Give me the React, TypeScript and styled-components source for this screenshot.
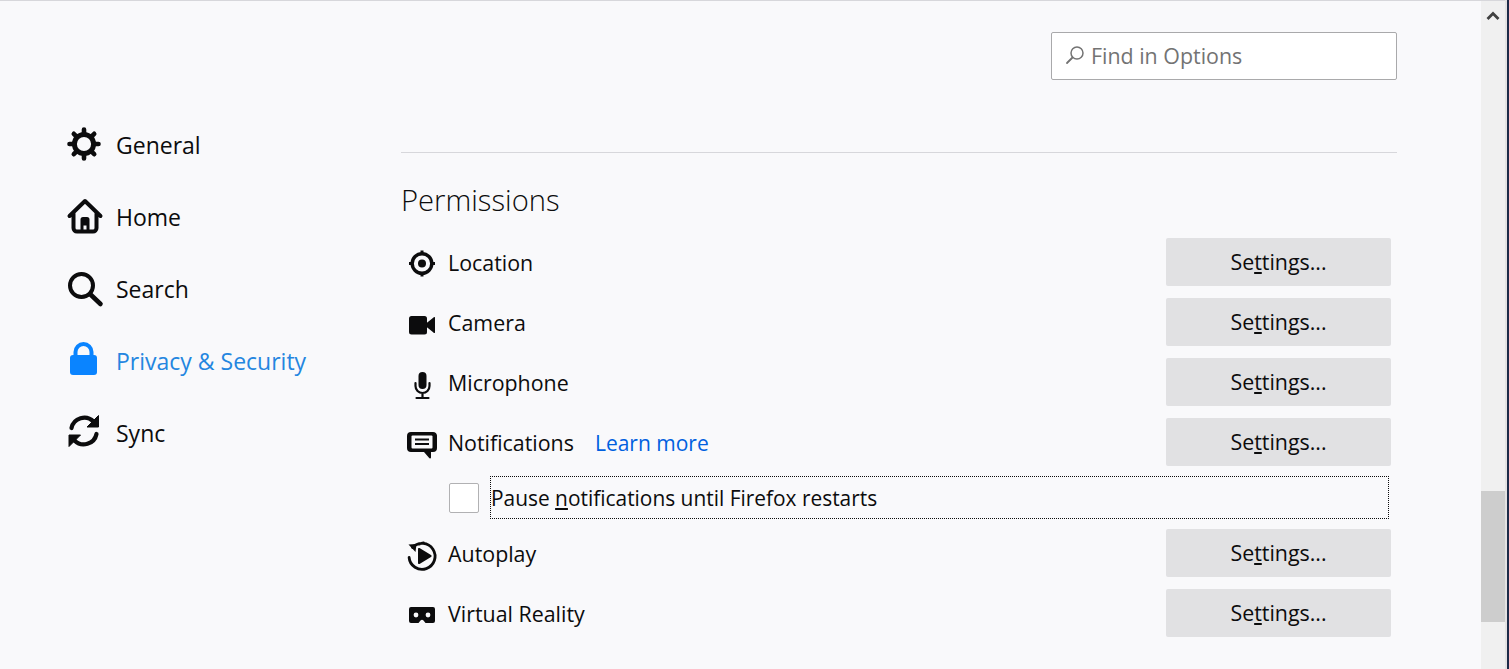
import styled, { createGlobalStyle } from "styled-components";

const GlobalStyle = createGlobalStyle`
    html, body {
        margin: 0;
        height: 100%;
        overflow: hidden;
        background: #f9f9fb;
    }
    body {
        color: #0c0c0d;
        font-family: "Open Sans", "Noto Sans", sans-serif;
        font-size: 21.4px;
    }
`;

const Page = styled.div`
    border-top: 1px solid #d7d7db;
    box-sizing: border-box;
    display: flex;
    height: 669px;
    width: 1509px;
`;

const Main = styled.div`
    display: flex;
    flex: 1;
    flex-direction: column;
    min-width: 0;
`;

const TopBar = styled.div`
    display: flex;
    justify-content: flex-end;
    padding: 31px 84px 0 0;
`;

const SearchBox = styled.div`
    align-items: center;
    background: #fff;
    border: 1px solid #a9a9ab;
    border-radius: 2px;
    box-sizing: border-box;
    color: #737373;
    display: flex;
    gap: 6px;
    height: 48px;
    padding: 0 0 2px 13px;
    width: 346px;
`;

const Columns = styled.div`
    display: flex;
    flex: 1;
`;

const Sidebar = styled.nav`
    display: flex;
    flex-direction: column;
    padding: 29px 0 0 67px;
    width: 334px;
`;

const NavItem = styled.div<{ $active?: boolean }>`
    align-items: center;
    color: ${(props) => (props.$active ? "#0a84ff" : "#0c0c0d")};
    display: flex;
    gap: 13px;
    height: 72px;
`;

const NavLabel = styled.span<{ $active?: boolean }>`
    color: ${(props) => (props.$active ? "#2486e0" : "#0c0c0d")};
    font-size: 23px;
`;

const IconBox = styled.span<{ $size: number }>`
    align-items: center;
    display: flex;
    flex: none;
    height: ${(props) => props.$size}px;
    justify-content: center;
    width: ${(props) => props.$size}px;

    svg {
        overflow: visible;
    }
`;

const Content = styled.section`
    display: flex;
    flex-direction: column;
    margin-right: 84px;
    padding-top: 72px;
    width: 996px;
`;

const Divider = styled.hr`
    background: #d7d7db;
    border: 0;
    height: 1px;
    margin: 0;
`;

const Heading = styled.h2`
    font-size: 29.2px;
    font-weight: 300;
    line-height: 42px;
    margin: 26px 0 17px;
`;

const Rows = styled.div`
    display: flex;
    flex-direction: column;
`;

const Row = styled.div`
    align-items: center;
    display: flex;
    gap: 11px;
    height: 48px;
    margin-bottom: 12px;
    padding: 0 6px;
`;

const RowLabel = styled.span`
    align-items: baseline;
    display: flex;
    flex: 1;
    gap: 21px;
`;

const LearnMore = styled.a`
    color: #0060df;
    font-size: 21px;
`;

const SettingsButton = styled.button`
    background: #e1e1e3;
    border: 0;
    border-radius: 2px;
    color: #0c0c0d;
    font: inherit;
    height: 48px;
    padding: 0 0 2px;
    width: 225px;
`;

const PauseRow = styled.div`
    align-items: center;
    display: flex;
    gap: 11px;
    height: 43px;
    margin: -2px 8px 10px 48px;
`;

const Checkbox = styled.span`
    background: #fff;
    border: 1px solid #b1b1b3;
    border-radius: 2px;
    box-sizing: border-box;
    flex: none;
    height: 30px;
    width: 30px;
`;

const PauseLabel = styled.label`
    align-items: center;
    border: 1px dotted #0c0c0d;
    box-sizing: border-box;
    display: flex;
    flex: 1;
    font-size: 20.9px;
    height: 43px;
`;

const Scrollbar = styled.div`
    background: #f0f0f0;
    box-sizing: border-box;
    display: flex;
    flex: none;
    flex-direction: column;
    justify-content: space-between;
    padding-bottom: 47px;
    width: 24px;
`;

const ScrollArrow = styled.span`
    align-items: center;
    display: flex;
    height: 30px;
    justify-content: center;
`;

const ScrollThumb = styled.div`
    background: #cdcdcd;
    height: 131px;
`;

// Sliver of the window behind the browser, down the right edge of the shot
const EdgeGlow = styled.div`
    background: #e4e2e2;
    flex: none;
    height: 669px;
    margin-top: -1px;
    width: 2px;
`;

const EdgeLine = styled.div`
    background: #1c2a48;
    flex: none;
    height: 669px;
    margin-top: -1px;
    width: 2px;
`;

const Gear = () => (
    <svg width="36" height="36" viewBox="0 0 36 36">
        <g transform="translate(-1 -1)">
            <circle cx="18" cy="18" r="9.6" fill="none" stroke="currentColor" strokeWidth="5" />
            <path
                d="M18 3.500v4M18 28.500v4M3.500 18h4M28.500 18h4M7.800 7.800l2.800 2.800M25.400 25.400l2.800 2.800M7.800 28.200l2.800-2.800M25.400 10.600l2.800-2.800"
                stroke="currentColor"
                strokeWidth="4.600"
                strokeLinecap="round"
            />
        </g>
    </svg>
);

const Home = () => (
    <svg width="36" height="36" viewBox="0 0 36 36">
        <g transform="translate(0 -0.5)">
            <path
                d="M2.500 17.500 18 2.500l15.500 15M6.500 15v14.500a3.500 3.500 0 0 0 3.500 3.500h16a3.500 3.500 0 0 0 3.500-3.500V15"
                fill="none"
                stroke="currentColor"
                strokeWidth="4"
                strokeLinecap="round"
                strokeLinejoin="round"
            />
            <path d="M13.500 33V21a2.500 2.500 0 0 1 2.500-2.500h4a2.500 2.500 0 0 1 2.500 2.500v12h-3v-6h-3v6z" fill="currentColor" />
        </g>
    </svg>
);

const SearchGlass = () => (
    <svg width="36" height="36" viewBox="0 0 36 36">
        <circle cx="14.500" cy="14.500" r="11.500" fill="none" stroke="currentColor" strokeWidth="4" />
        <path d="m23 23 10.500 10" stroke="currentColor" strokeWidth="4.600" strokeLinecap="round" />
    </svg>
);

const Lock = () => (
    <svg width="36" height="36" viewBox="0 0 36 36">
        <g transform="translate(-1.5 -2)">
            <path d="M10 15.500V11a8 8 0 0 1 16 0v4.500" fill="none" stroke="currentColor" strokeWidth="4" />
            <rect x="4.500" y="14" width="27" height="20" rx="3" fill="currentColor" />
        </g>
    </svg>
);

const Sync = () => (
    <svg width="36" height="36" viewBox="0 0 36 36">
        <g transform="translate(-1 -2)">
            <g fill="none" stroke="currentColor" strokeWidth="4.200" strokeLinecap="round">
                <path d="M5.500 15a13 13 0 0 1 22-6.500l3 3" />
                <path d="M30.500 21a13 13 0 0 1-22 6.500l-3-3" />
            </g>
            <path d="M32.500 2.500v11.500H21zM3 33.500V22h11.500z" fill="currentColor" stroke="currentColor" strokeLinejoin="round" />
        </g>
    </svg>
);

const LocationIcon = () => (
    <svg width="30" height="30" viewBox="0 0 30 30">
        <circle cx="15" cy="16.500" r="9.800" fill="none" stroke="#0c0c0d" strokeWidth="3.400" />
        <circle cx="15" cy="16.500" r="4" fill="#0c0c0d" />
        <path d="M15 3.500v3M15 26.500v3M2 16.500h3M25 16.500h3" stroke="#0c0c0d" strokeWidth="3" />
    </svg>
);

const CameraIcon = () => (
    <svg width="30" height="30" viewBox="0 0 30 30">
        <rect x="2" y="9" width="18" height="18.500" rx="2.500" fill="#0c0c0d" />
        <path d="M19 16.500 26.500 10.500a.7.700 0 0 1 1.500.500v14a.7.700 0 0 1-1.500.500L19 19.500z" fill="#0c0c0d" />
    </svg>
);

const MicIcon = () => (
    <svg width="30" height="30" viewBox="0 0 30 30">
        <g transform="translate(0.5 3)">
            <rect x="11" y="2" width="8" height="17" rx="4" fill="#0c0c0d" />
            <path
                d="M8 13v3a7 7 0 0 0 14 0v-3M15 23v5M9 28h12"
                fill="none"
                stroke="#0c0c0d"
                strokeWidth="2.200"
                strokeLinecap="round"
            />
        </g>
    </svg>
);

const NotificationIcon = () => (
    <svg width="30" height="30" viewBox="0 0 30 30">
        <g transform="translate(0 3)">
            <path
                d="M4 2h22a4 4 0 0 1 4 3.500V18a4 4 0 0 1-4 4h-2v5.500a1 1 0 0 1-1.800.600L17 22H4a4 4 0 0 1-4-4V6a4 4 0 0 1 4-4z"
                fill="#0c0c0d"
            />
            <path d="M5.500 5.500h19a1 1 0 0 1 1 1V17.500a1 1 0 0 1-1 1H5.500a1 1 0 0 1-1-1V6.500a1 1 0 0 1 1-1z" fill="#f9f9fb" />
            <path d="M8 9.500h14M8 14h14" stroke="#0c0c0d" strokeWidth="2.200" />
        </g>
    </svg>
);

const AutoplayIcon = () => (
    <svg width="30" height="30" viewBox="0 0 30 30">
        <g transform="translate(0 3)">
            <path
                d="M5.500 6.500a13 13 0 1 1-3.400 10M12.500 3a13 13 0 0 1 4-1"
                fill="none"
                stroke="#0c0c0d"
                strokeWidth="2.800"
                strokeLinecap="round"
            />
            <path d="M1.500 3.500 9.500 3l-1 8zM11 8a1 1 0 0 1 1.500-.900L24 14a1.200 1.200 0 0 1 0 2L12.500 22.900a1 1 0 0 1-1.500-.900z" fill="#0c0c0d" />
        </g>
    </svg>
);

const VrIcon = () => (
    <svg width="30" height="30" viewBox="0 0 30 30">
        <path
            d="M4 9h22a2 2 0 0 1 2 2v12a2 2 0 0 1-2 2h-7.500l-2-2.500a2 2 0 0 0-3 0L11.500 25H4a2 2 0 0 1-2-2V11a2 2 0 0 1 2-2z"
            fill="#0c0c0d"
        />
        <circle cx="9" cy="17" r="2.400" fill="#f9f9fb" />
        <circle cx="21" cy="17" r="2.400" fill="#f9f9fb" />
    </svg>
);

const navItems = [
    { label: "General", icon: <Gear /> },
    { label: "Home", icon: <Home /> },
    { label: "Search", icon: <SearchGlass /> },
    { label: "Privacy & Security", icon: <Lock />, active: true },
    { label: "Sync", icon: <Sync /> },
];

const SettingsLabel = () => (
    <>
        Se<u>t</u>tings...
    </>
);

const PermissionRow = ({ icon, label, link }: { icon: JSX.Element; label: string; link?: string }) => (
    <Row>
        <IconBox $size={30}>{icon}</IconBox>
        <RowLabel>
            {label}
            {link && <LearnMore>{link}</LearnMore>}
        </RowLabel>
        <SettingsButton>
            <SettingsLabel />
        </SettingsButton>
    </Row>
);

export default function App() {
    return (
        <>
            <GlobalStyle />
            <Page>
                <Main>
                    <TopBar>
                        <SearchBox>
                            <svg width="20" height="20" viewBox="0 0 20 20">
                                <circle cx="12" cy="8" r="6" fill="none" stroke="#737373" strokeWidth="1.500" />
                                <path d="M7.500 12.500 2 18" stroke="#737373" strokeWidth="1.800" strokeLinecap="round" />
                            </svg>
                            Find in Options
                        </SearchBox>
                    </TopBar>
                    <Columns>
                        <Sidebar>
                            {navItems.map((item) => (
                                <NavItem key={item.label} $active={item.active}>
                                    <IconBox $size={36}>{item.icon}</IconBox>
                                    <NavLabel $active={item.active}>{item.label}</NavLabel>
                                </NavItem>
                            ))}
                        </Sidebar>
                        <Content>
                            <Divider />
                            <Heading>Permissions</Heading>
                            <Rows>
                                <PermissionRow icon={<LocationIcon />} label="Location" />
                                <PermissionRow icon={<CameraIcon />} label="Camera" />
                                <PermissionRow icon={<MicIcon />} label="Microphone" />
                                <PermissionRow icon={<NotificationIcon />} label="Notifications" link="Learn more" />
                                <PauseRow>
                                    <Checkbox />
                                    <PauseLabel>
                                        <span>
                                            Pause <u>n</u>otifications until Firefox restarts
                                        </span>
                                    </PauseLabel>
                                </PauseRow>
                                <PermissionRow icon={<AutoplayIcon />} label="Autoplay" />
                                <PermissionRow icon={<VrIcon />} label="Virtual Reality" />
                            </Rows>
                        </Content>
                    </Columns>
                </Main>
                <Scrollbar>
                    <ScrollArrow>
                        <svg width="14" height="10" viewBox="0 0 14 10">
                            <path d="M1.500 8 7 2.500 12.500 8" fill="none" stroke="#404040" strokeWidth="2.800" />
                        </svg>
                    </ScrollArrow>
                    <ScrollThumb />
                </Scrollbar>
                <EdgeGlow />
                <EdgeLine />
            </Page>
        </>
    );
}
